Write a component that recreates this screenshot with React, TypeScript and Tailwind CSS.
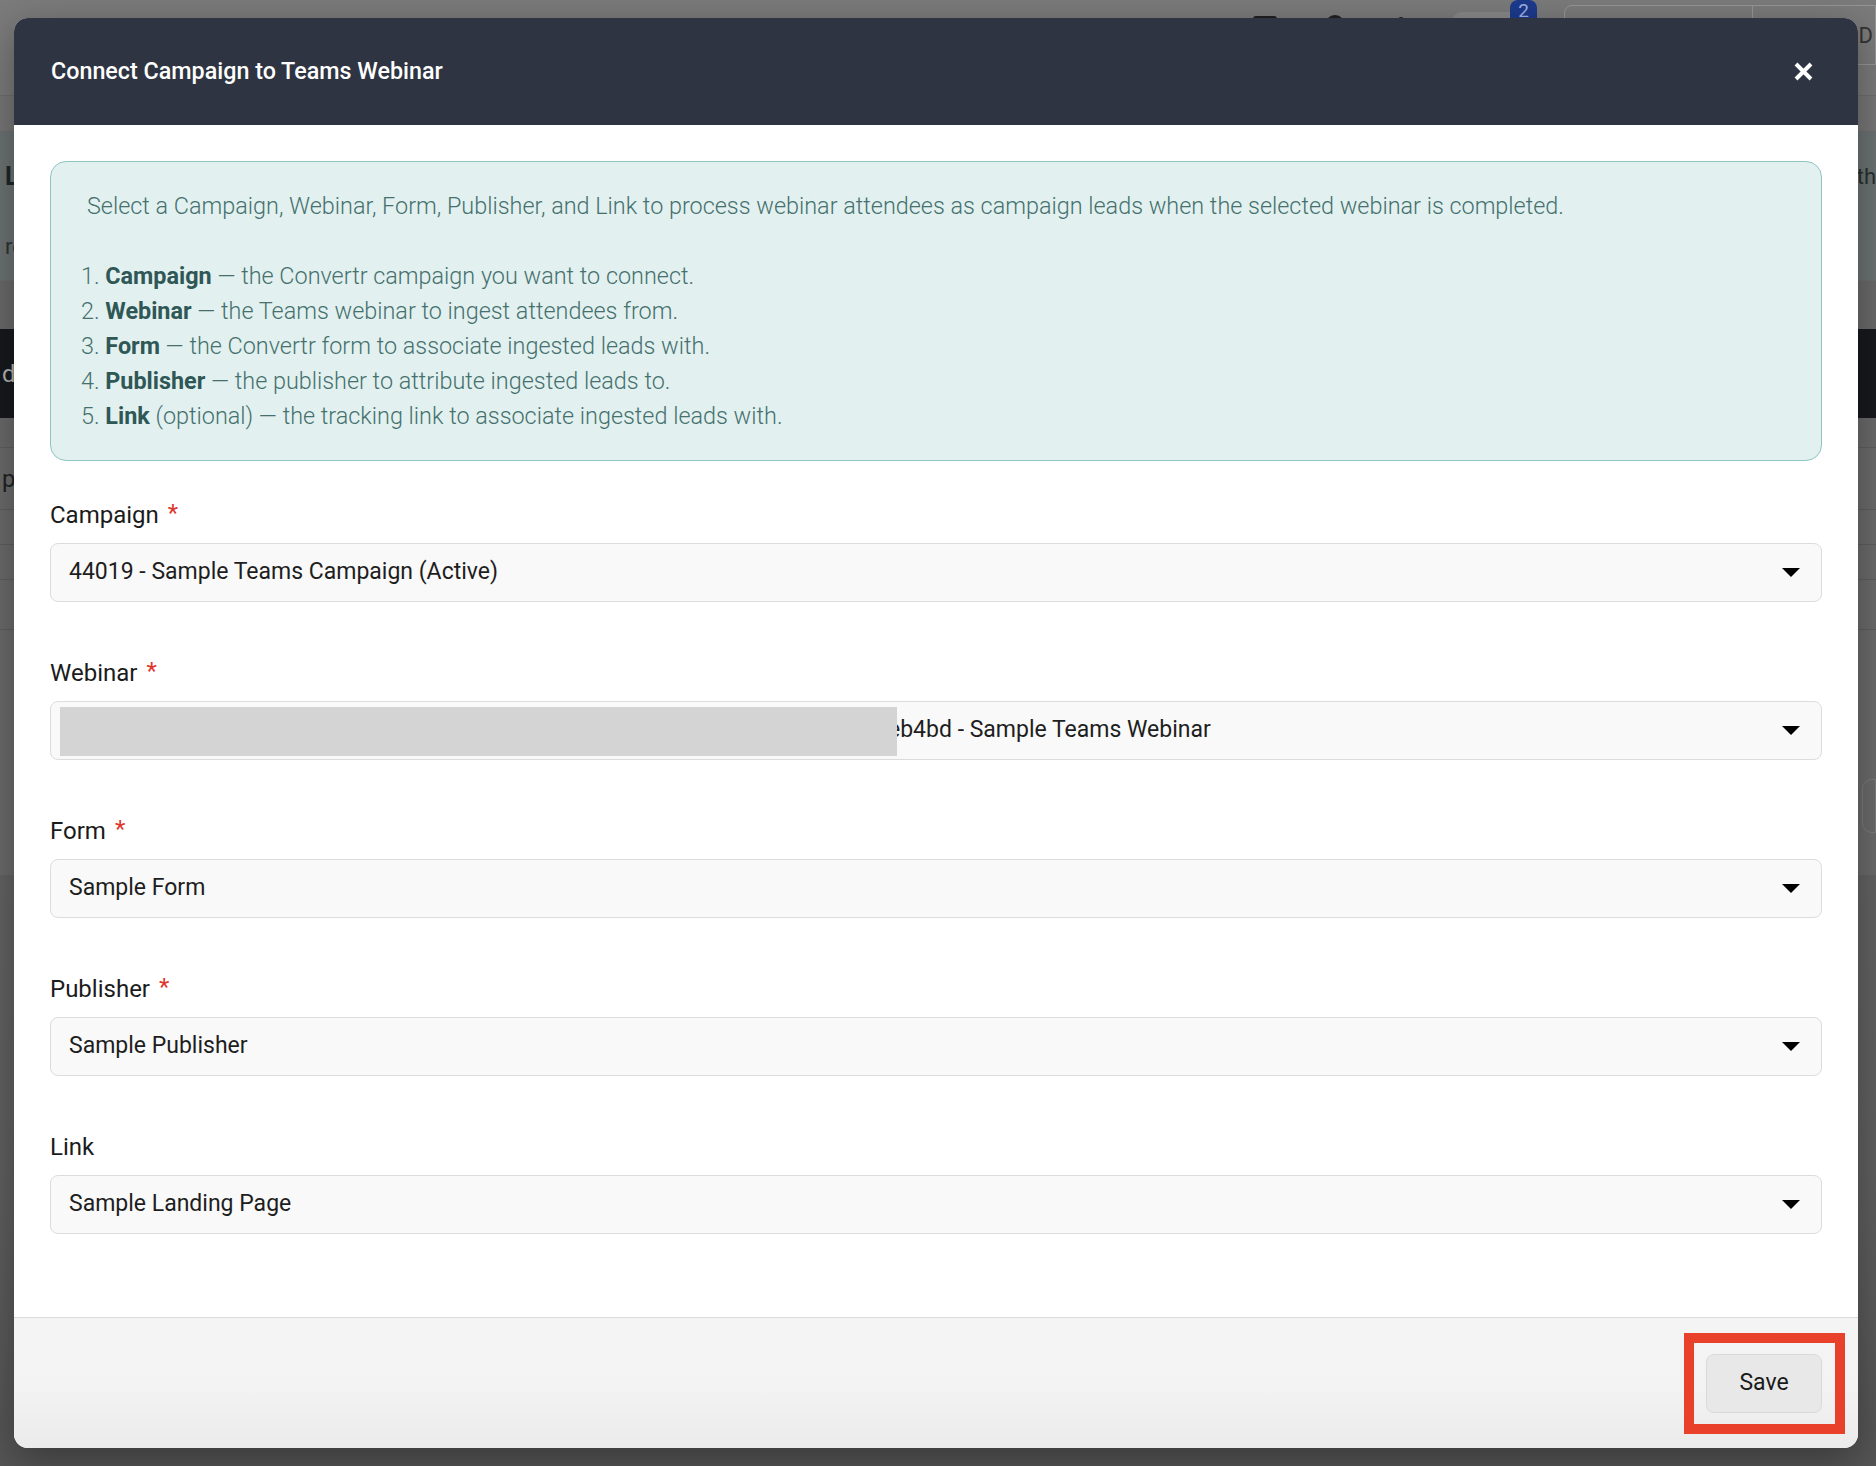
import React from 'react'

// ── Form fields shown in the modal ────────────────────────────────────────────

const FIELDS: { label: string; required: boolean; value: string; redacted?: boolean }[] = [
  { label: 'Campaign',  required: true,  value: '44019 - Sample Teams Campaign (Active)' },
  { label: 'Webinar',   required: true,  value: 'eb4bd - Sample Teams Webinar', redacted: true },
  { label: 'Form',      required: true,  value: 'Sample Form' },
  { label: 'Publisher', required: true,  value: 'Sample Publisher' },
  { label: 'Link',      required: false, value: 'Sample Landing Page' },
]

const STEPS: { name: string; extra?: string; text: string }[] = [
  { name: 'Campaign',  text: 'the Convertr campaign you want to connect.' },
  { name: 'Webinar',   text: 'the Teams webinar to ingest attendees from.' },
  { name: 'Form',      text: 'the Convertr form to associate ingested leads with.' },
  { name: 'Publisher', text: 'the publisher to attribute ingested leads to.' },
  { name: 'Link', extra: ' (optional)', text: 'the tracking link to associate ingested leads with.' },
]

function Caret() {
  return (
    <svg width="18" height="9" viewBox="0 0 18 9" className="shrink-0">
      <path d="M0 0h18L9 9z" fill="#000" />
    </svg>
  )
}

// ── Dimmed page behind the modal ──────────────────────────────────────────────

function BackdropPage() {
  return (
    <div className="flex h-[1466px] w-full flex-col overflow-hidden bg-[#666]">
      {/* Top nav */}
      <div className="flex h-[96px] shrink-0 items-start justify-end border-b border-[#6f6f6f] bg-[#7b7b7b]">
        <div className="mr-[48px] mt-[16px] h-[22px] w-[24px] rounded-[3px] border-[3px] border-[#202020]" />
        <div className="mr-[53px] mt-[15px] h-[20px] w-[20px] rounded-full border-[3px] border-[#202020]" />
        <div className="mr-[48px] mt-[17px] h-[6px] w-[6px] rounded-full bg-[#202020]" />
        <div className="relative mr-[34px] mt-[12px] h-[40px] w-[78px] rounded-[10px] bg-[#888]">
          <span className="absolute -right-[7px] -top-[12px] flex h-[34px] w-[27px] items-start justify-center rounded-[8px] bg-[#1d3a8c] pt-[1px] text-[19px] leading-[20px] text-[#9fb3e6]">
            2
          </span>
        </div>
        <div className="mt-[5px] flex h-[60px] w-[312px] items-center rounded-l-[8px] border border-[#969696]">
          <div className="h-full w-[188px] border-r border-[#969696]" />
          <span className="ml-auto mr-[2px] text-[22px] text-[#333]">D</span>
        </div>
      </div>
      <div className="h-[36px] shrink-0 border-b border-[#6f6f6f] bg-[#777]" />
      {/* Section header */}
      <div className="flex h-[149px] shrink-0 flex-col border-b border-[#6a706f] bg-[#6c7372] pl-[5px] pt-[30px]">
        <div className="flex items-center justify-between">
          <span className="text-[25px] font-bold leading-[30px] text-[#1c2727]">Lead Ingestion</span>
          <span className="text-[22px] leading-[30px] text-[#263131]">Connect a Teams webinar with</span>
        </div>
        <span className="mt-[42px] text-[22px] leading-[26px] text-[#2b3434]">requires a campaign</span>
      </div>
      <div className="h-[48px] shrink-0 bg-[#6a6a6a]" />
      <div className="flex h-[89px] shrink-0 items-center bg-[#17191c] px-[2px]">
        <span className="text-[24px] text-[#b5b5b5]">d</span>
      </div>
      <div className="h-[30px] shrink-0 border-b border-[#5f5f5f] bg-[#6a6a6a]" />
      <div className="flex h-[62px] shrink-0 items-center border-b border-[#5f5f5f] bg-[#6b6b6b] px-[2px]">
        <span className="text-[24px] text-[#222]">pa</span>
      </div>
      <div className="h-[35px] shrink-0 border-b border-[#5f5f5f] bg-[#6b6b6b]" />
      <div className="h-[35px] shrink-0 border-b border-[#5f5f5f] bg-[#6b6b6b]" />
      <div className="h-[50px] shrink-0 border-b border-[#5f5f5f] bg-[#6b6b6b]" />
      <div className="flex h-[245px] shrink-0 items-end justify-end bg-[#6b6b6b] pb-[42px]">
        <div className="h-[54px] w-[14px] rounded-l-[10px] border border-[#7d7d7d]" />
      </div>
      <div className="flex-1 bg-gradient-to-b from-[#636363] via-[#606060] to-[#555]" />
    </div>
  )
}

// ── Modal ─────────────────────────────────────────────────────────────────────

function SelectBox({ value, redacted }: { value: string; redacted?: boolean }) {
  return (
    <div className="mt-[13px] flex h-[59px] items-center justify-between overflow-hidden rounded-[8px] border border-[#dcdcdc] bg-[#f9f9f9] pl-[18px] pr-[21px]">
      {redacted ? (
        <div className="flex items-center">
          <div className="relative z-10 ml-[-9px] mt-[1px] h-[49px] w-[837px] bg-[#d4d4d4]" />
          <span className="ml-[-9px] whitespace-nowrap text-[23px] text-[#1e1e1e]">{value}</span>
        </div>
      ) : (
        <span className="whitespace-nowrap text-[23px] text-[#1e1e1e]">{value}</span>
      )}
      <Caret />
    </div>
  )
}

export default function App() {
  return (
    <div className="relative h-[1466px] w-full overflow-hidden font-['Roboto',sans-serif]">
      <BackdropPage />

      {/* Modal overlay */}
      <div className="absolute inset-0 flex items-start pl-[14px] pt-[18px]">
        <div className="flex h-[1430px] w-[1844px] flex-col overflow-hidden rounded-[14px] bg-white shadow-[0_12px_40px_rgba(0,0,0,0.35)]">
          {/* Header */}
          <div className="flex h-[107px] shrink-0 items-center justify-between bg-[#2e3441] pl-[37px] pr-[45px]">
            <h2 className="text-[23.3px] font-medium text-white">Connect Campaign to Teams Webinar</h2>
            <svg width="19" height="19" viewBox="0 0 19 19">
              <path d="M2 2l15 15M17 2L2 17" stroke="#fff" strokeWidth="4" strokeLinecap="butt" />
            </svg>
          </div>

          {/* Body */}
          <div className="flex flex-1 flex-col px-[36px] pt-[36px]">
            <div className="h-[300px] shrink-0 rounded-[16px] border border-[#8fc5c3] bg-[#e2f0ef] pl-[30px] pt-[27px] text-[23.4px] font-light leading-[35px] text-[#45706e]">
              <p className="ml-[6px] mb-[35px]">
                Select a Campaign, Webinar, Form, Publisher, and Link to process webinar attendees as campaign leads when the selected webinar is completed.
              </p>
              <div>
                {STEPS.map((s, i) => (
                  <div key={s.name} className="whitespace-nowrap">
                    {i + 1}. <span className="font-bold text-[#2f5756]">{s.name}</span>{s.extra} — {s.text}
                  </div>
                ))}
              </div>
            </div>

            <div className="mt-[39px] flex flex-col gap-[56px]">
              {FIELDS.map(f => (
                <div key={f.label}>
                  <div className="flex h-[30px] items-center text-[24px] leading-[30px] text-[#1b1b1b]">
                    {f.label}
                    {f.required && <span className="ml-[9px] -mt-[4px] text-[#e0352b]">*</span>}
                  </div>
                  <SelectBox value={f.value} redacted={f.redacted} />
                </div>
              ))}
            </div>
          </div>

          {/* Footer */}
          <div className="flex h-[131px] shrink-0 items-start justify-end border-t border-[#dadada] bg-gradient-to-b from-[#f4f4f4] via-[#f3f3f3] to-[#ebebeb] pr-[36px] pt-[36px]">
            <div className="relative">
              <button className="flex h-[59px] w-[116px] items-center justify-center rounded-[8px] border border-[#d9d9d9] bg-[#e8e8e8] text-[23px] text-[#1a1a1a]">
                Save
              </button>
              {/* Highlight annotation */}
              <span className="pointer-events-none absolute -bottom-[21px] -left-[22px] -right-[23px] -top-[21px] border-[10px] border-[#e8402a]" />
            </div>
          </div>
        </div>
      </div>
    </div>
  )
}
